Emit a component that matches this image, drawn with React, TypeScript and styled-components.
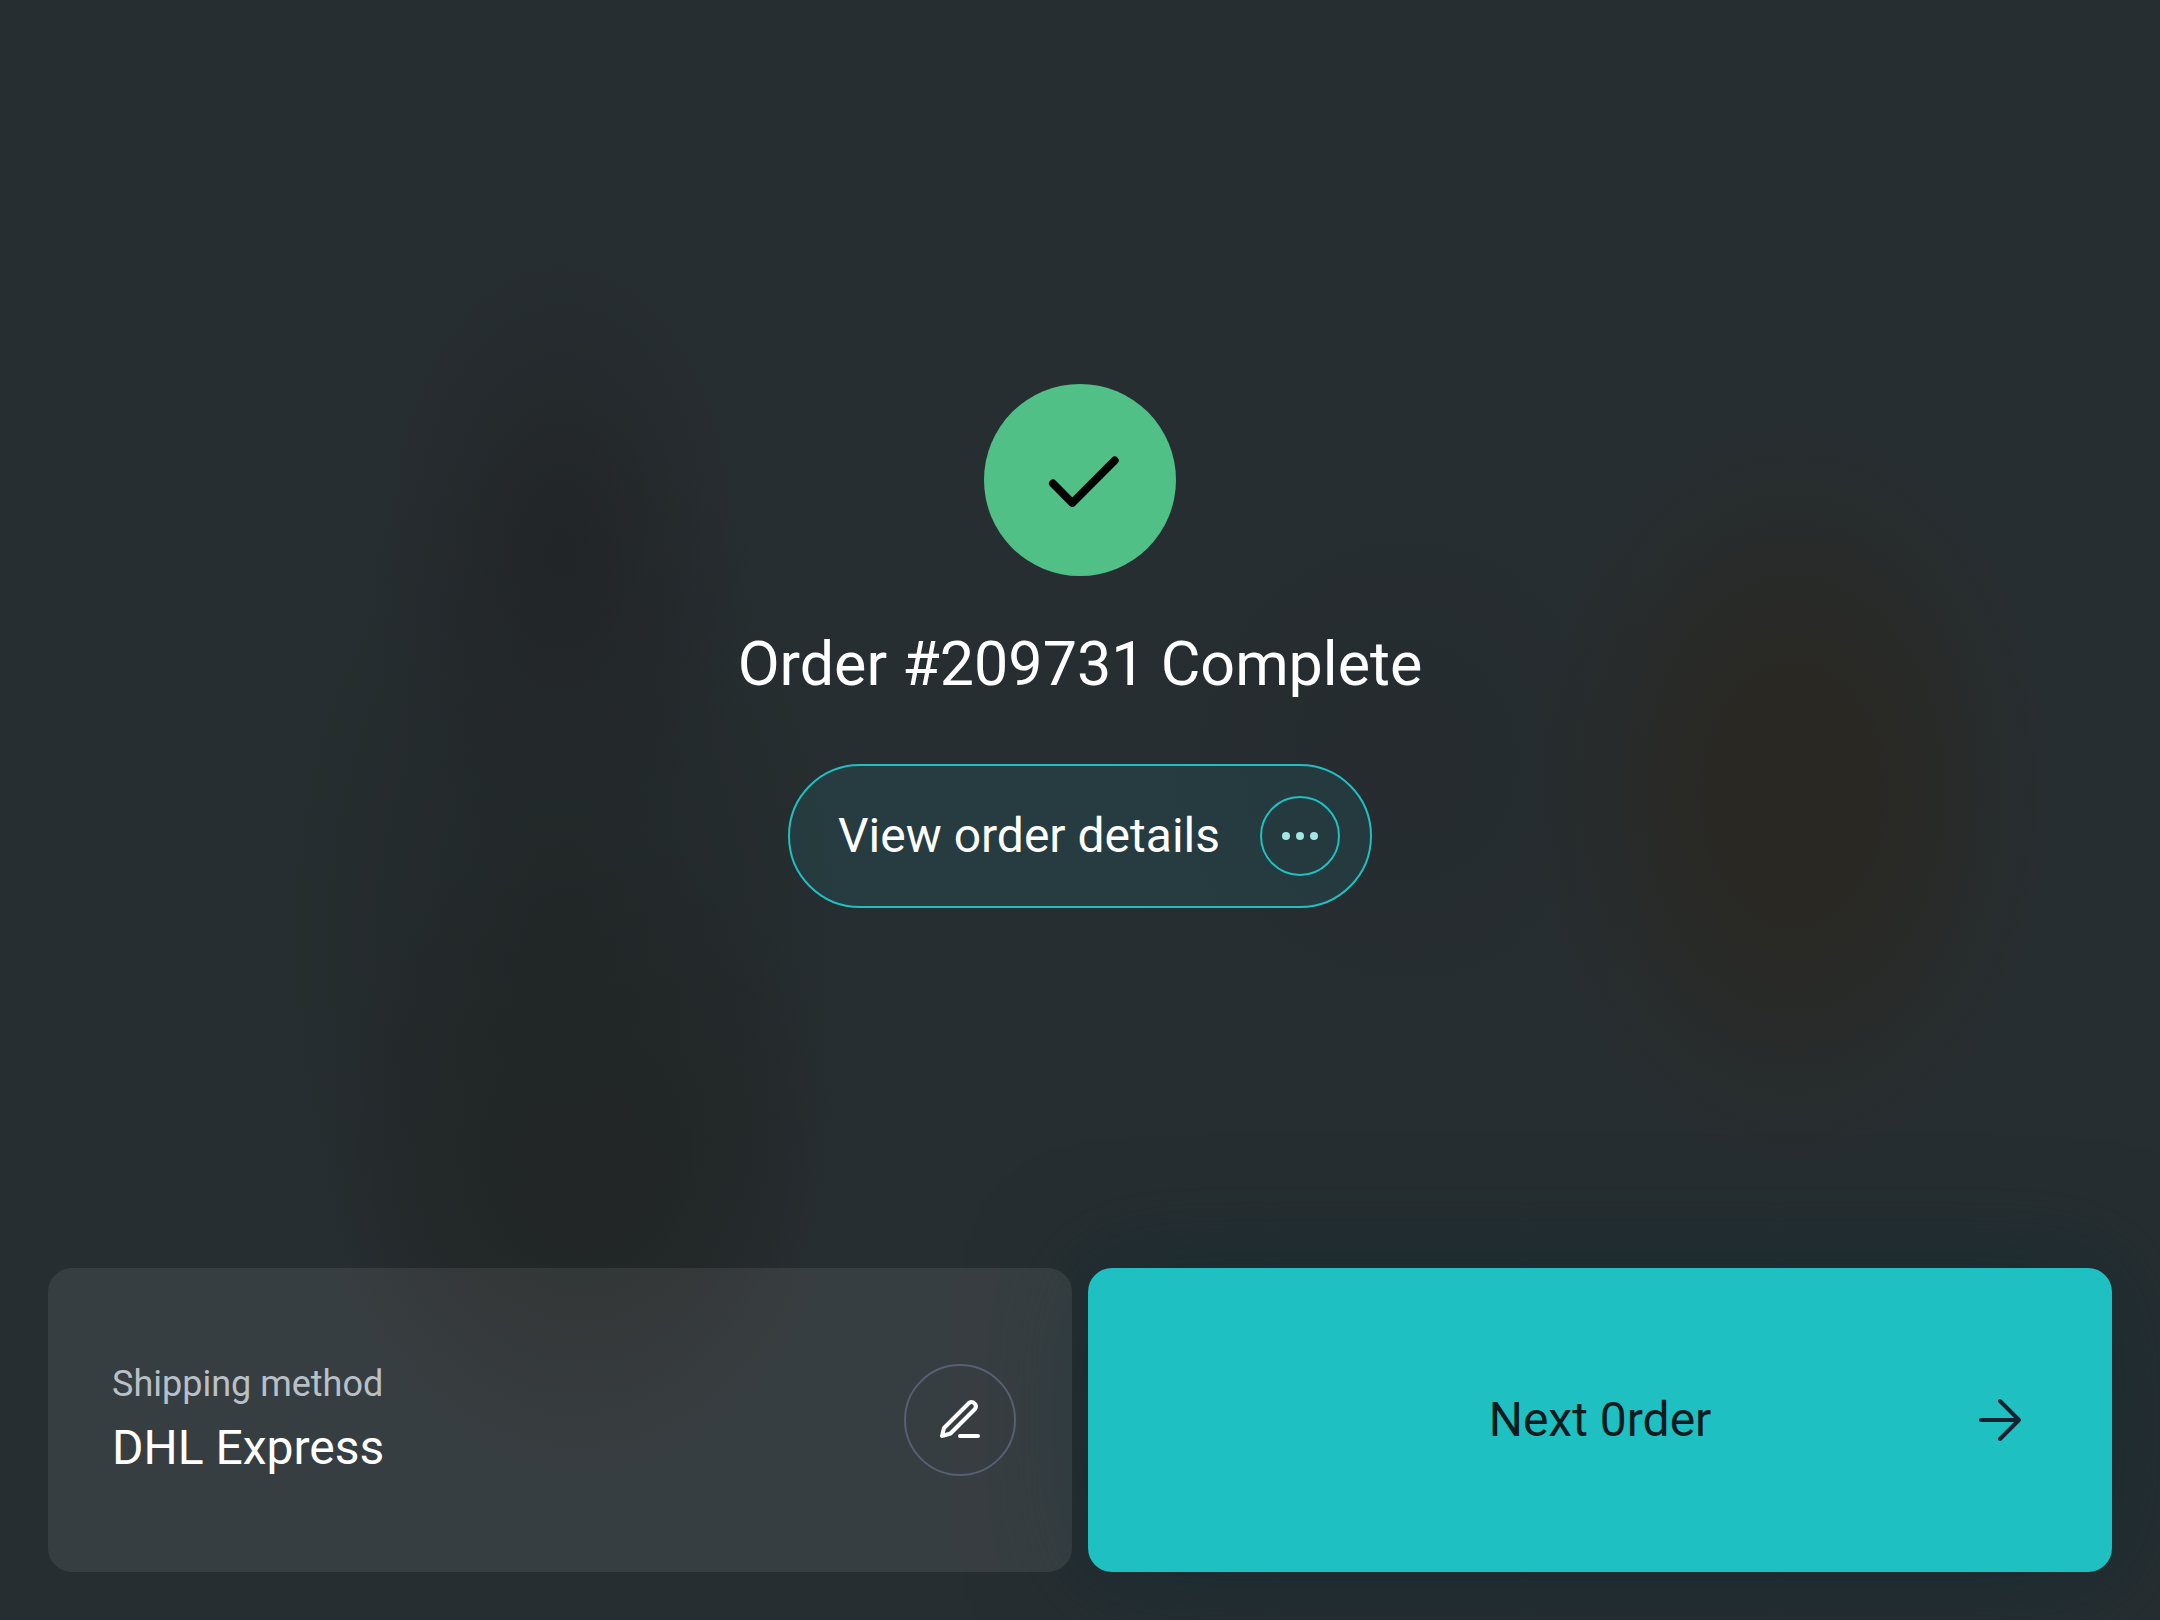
import React from "react";
import styled, { createGlobalStyle } from "styled-components";

const color = {
  base: "#272e31",
  teal: "#1ec0c1",
  tealSoft: "#a3e6e6",
  green: "#51c087",
  ink: "#101b1f",
  arrow: "#172231",
  muted: "#b9c0c8",
  ring: "#566072",
};

const GlobalStyle = createGlobalStyle`
  *, *::before, *::after { box-sizing: border-box; }
  body {
    margin: 0;
    background: ${color.base};
    color: #fff;
    font-family: Roboto, "Liberation Sans", sans-serif;
  }
  button {
    margin: 0;
    font: inherit;
    color: inherit;
    cursor: pointer;
  }
  svg {
    display: block;
    fill: none;
    stroke: currentColor;
    stroke-linecap: round;
    stroke-linejoin: round;
  }
`;

const Page = styled.main`
  display: grid;
  grid-template-rows: 1fr auto;
  gap: 24px;
  min-height: 100vh;
  padding: 48px;
  overflow: hidden;
  background:
    radial-gradient(ellipse 9% 20% at 26% 34%, rgba(33, 36, 39, 0.9), rgba(33, 36, 39, 0) 100%),
    radial-gradient(ellipse 14% 32% at 26% 58%, rgba(33, 39, 39, 0.95), rgba(33, 39, 39, 0) 100%),
    radial-gradient(ellipse 12% 20% at 27% 71%, rgba(33, 36, 36, 0.95) 20%, rgba(33, 36, 36, 0) 100%),
    radial-gradient(ellipse 12% 23% at 83% 49%, rgba(41, 40, 35, 1) 30%, rgba(41, 40, 35, 0) 100%),
    radial-gradient(ellipse 14% 20% at 65% 47%, rgba(36, 42, 45, 0.7), rgba(36, 42, 45, 0) 100%),
    ${color.base};
`;

const Confirmation = styled.section`
  display: flex;
  flex-direction: column;
  align-items: center;
  justify-content: center;
`;

const SuccessBadge = styled.div`
  display: grid;
  place-items: center;
  width: 192px;
  height: 192px;
  border-radius: 50%;
  background: ${color.green};
  color: #000;
`;

const Title = styled.h1`
  margin: 48px 0 60px;
  font-size: 61px;
  line-height: 80px;
  font-weight: 400;
  text-align: center;
`;

const DetailsButton = styled.button`
  display: flex;
  align-items: center;
  gap: 40px;
  height: 144px;
  padding: 0 30px 0 48px;
  border: 2px solid ${color.teal};
  border-radius: 72px;
  background: rgba(31, 191, 192, 0.1);
  font-size: 48px;
  line-height: 64px;
`;

const Ring = styled.span<{ $size: number; $tone: string }>`
  display: grid;
  place-items: center;
  flex: none;
  width: ${(p) => p.$size}px;
  height: ${(p) => p.$size}px;
  border: 2px solid ${(p) => p.$tone};
  border-radius: 50%;
  background: transparent;
`;

const Dots = styled.svg`
  color: ${color.tealSoft};
`;

const Actions = styled.footer`
  display: grid;
  grid-template-columns: 1fr 1fr;
  gap: 16px;
`;

const ShippingCard = styled.section`
  position: relative;
  z-index: 1;
  display: flex;
  align-items: center;
  justify-content: space-between;
  min-height: 304px;
  padding: 48px 56px 48px 64px;
  border-radius: 24px;
  background: rgba(255, 255, 255, 0.08);
`;

const Method = styled.dl`
  display: grid;
  gap: 8px;
  margin: 0;
`;

const MethodLabel = styled.dt`
  font-size: 36px;
  line-height: 48px;
  color: ${color.muted};
`;

const MethodValue = styled.dd`
  margin: 0;
  font-size: 48px;
  line-height: 64px;
`;

const EditButton = styled(Ring).attrs({ as: "button" })`
  padding: 0;
  color: #fff;
`;

const NextButton = styled.button`
  display: grid;
  grid-template-columns: 1fr auto 1fr;
  align-items: center;
  padding: 48px 80px;
  border: 0;
  border-radius: 24px;
  background: ${color.teal};
  box-shadow: 0 0 112px rgba(20, 42, 48, 0.95);
  color: ${color.ink};
  font-size: 48px;
  line-height: 64px;
`;

const NextLabel = styled.span`
  grid-column: 2;
`;

const NextIcon = styled.svg`
  justify-self: end;
  color: ${color.arrow};
`;

export default function App() {
  return (
    <>
      <GlobalStyle />
      <Page>
        <Confirmation>
          <SuccessBadge>
            <svg width="96" height="96" viewBox="0 0 96 96" strokeWidth="8" aria-hidden="true">
              <path d="M21 51.5 40.3 71 82.700 28.500" />
            </svg>
          </SuccessBadge>
          <Title>Order #209731 Complete</Title>
          <DetailsButton type="button">
            View order details
            <Ring $size={80} $tone={color.teal}>
              <Dots width="48" height="48" viewBox="0 0 48 48" strokeWidth="8" aria-hidden="true">
                <path d="M10 24h.01M24 24h.01M38 24h.01" />
              </Dots>
            </Ring>
          </DetailsButton>
        </Confirmation>
        <Actions>
          <ShippingCard>
            <Method>
              <MethodLabel>Shipping method</MethodLabel>
              <MethodValue>DHL Express</MethodValue>
            </Method>
            <EditButton $size={112} $tone={color.ring} aria-label="Edit shipping method">
              <svg width="48" height="48" viewBox="0 0 48 48" strokeWidth="4" aria-hidden="true">
                <path d="M33 7a4.3 4.3 0 0 1 6 6L14.500 37.500 6 40 8 32Z" />
                <path d="M24 40h18" />
              </svg>
            </EditButton>
          </ShippingCard>
          <NextButton type="button">
            <NextLabel>Next 0rder</NextLabel>
            <NextIcon width="64" height="64" viewBox="0 0 64 64" strokeWidth="4" aria-hidden="true">
              <path d="M13 32h38M32 13l19 19-19 19" />
            </NextIcon>
          </NextButton>
        </Actions>
      </Page>
    </>
  );
}
